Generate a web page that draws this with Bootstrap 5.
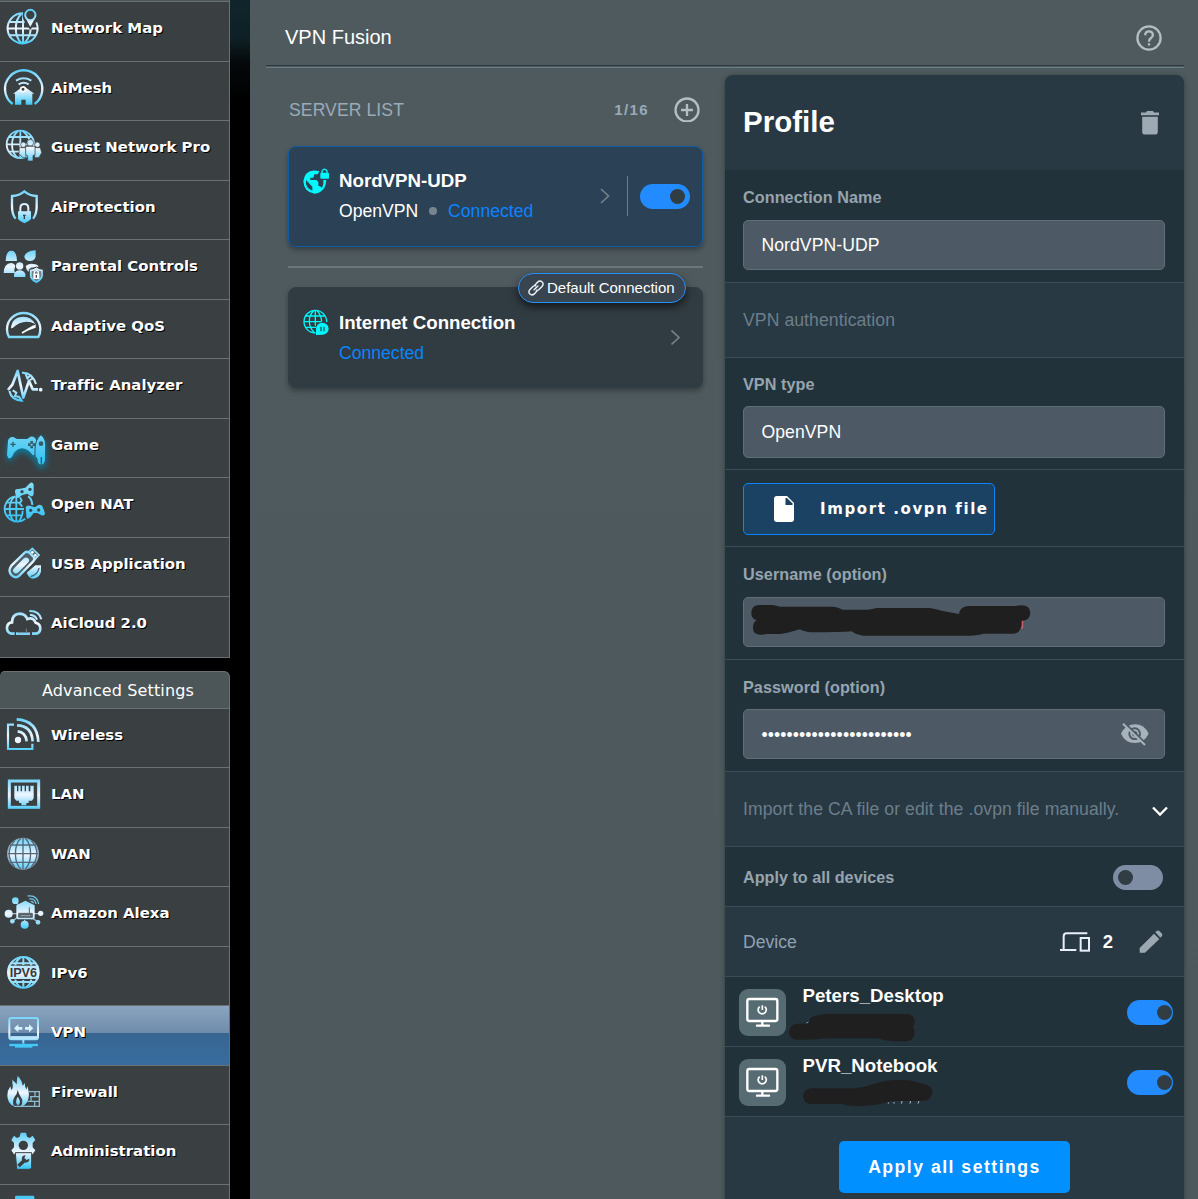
<!DOCTYPE html>
<html lang="en">
<head>
<meta charset="utf-8">
<meta name="viewport" content="width=device-width, initial-scale=1">
<title>VPN Fusion</title>
<link rel="stylesheet" href="https://cdn.jsdelivr.net/npm/bootstrap@5.3.0/dist/css/bootstrap.min.css">
<style>
body{background:#000;font-family:"Liberation Sans",Arial,sans-serif;color:#fff;font-size:17.6px;line-height:20px;height:1199px;overflow:hidden}
svg{display:block}
.frame{height:1199px;overflow:hidden}
.side{width:230px;font-family:"DejaVu Sans",Verdana,sans-serif;font-weight:700;font-size:14.95px;font-variant-ligatures:none;overflow:hidden}
.side-top{height:1px;background:#4c5558;border-right:1px solid #6b7173}
.side-item{height:59.5px;border-top:1px solid #6b7173;border-right:1px solid #6b7173;background:#3a3f41;color:#fff;text-decoration:none;white-space:nowrap}
.side-item svg{width:46px;height:58px;flex:none;margin-right:5px}
.side-item span{padding-top:16.2px;text-shadow:1px 1px 0 #000}
.side-head~.side-item span{padding-top:16px}
.side-last{height:62px;border-bottom:1px solid #6b7173}
.side-on{background:linear-gradient(#8aa4bf 0,#6f8cab 46%,#376590 46.5%,#386c9f 100%)}
.side-head{margin-top:13px;height:36.9px;background:#4c5558;border:1px solid #6b7173;border-bottom:0;border-left:0;border-radius:5px 6px 0 0;font-weight:400;font-size:16px;letter-spacing:.13px;padding:9px 0 0 42px}
.gutter{width:20px;background:linear-gradient(#10252b 0,#0e2025 38px,#05090b 62px,#000 100px)}
.stage{background:linear-gradient(#4f5a5e,#4d595d);padding:0 14px 0 16px}
.title-bar{height:65px;padding:0 22px 0 19px;font-size:20px}
.title-bar span{padding-top:26.5px;line-height:21px}
.title-bar svg{margin-top:25px}
.rule{height:3px;border-top:1px solid #30393c;border-bottom:1px solid #6a7c86;background:#4d595d}
.list-col{width:415px;margin-left:22px}
.list-head{height:77.5px;padding-top:28px;color:#9aaab7}
.list-title{padding-left:1px;letter-spacing:.08px}
.list-head b{font-size:15px;letter-spacing:1.4px}
.add-ic{margin:0 3px 0 25px}
.conn{height:101.5px;border-radius:8px;box-shadow:0 3px 5px rgba(0,0,0,.3);padding-left:14px}
.conn-on{background:#2b4155;border:1px solid #115ba4}
.conn-idle{background:#313c42;border:1px solid #2f3d45;height:101px}
.conn-ic{margin-top:21px}
.conn-tx{padding-left:9px;margin-top:-1px}
.conn-idle .conn-tx{margin-top:1px}
.conn-sub{margin-top:10.5px}
.nm{font-size:18.7px;font-weight:700}
.link-blue{color:#0a84ff}
.bullet{width:7.4px;height:7.4px;border-radius:50%;background:#77858f;margin:0 11.5px 0 11px}
.vline{width:1px;height:40px;background:#6d7d8a;margin:0 12px 0 17px}
.tog{width:50px;height:25px;border-radius:13px;background:#228bff;padding:5px;flex:none}
.tog i{display:block;width:15px;height:15px;border-radius:50%;background:#313d43;margin-left:25px}
.tog-off{background:#7e8ca4;margin:1px 3px 0 0}
.tog-off i{margin-left:0}
.tog-sm{width:46px;margin-top:23px}
.tog-sm i{margin-left:25px}
.sep{height:2px;background:#6b767b;margin:18.5px 0 19.5px}
.pill{position:absolute;right:16px;top:-15px;width:168px;height:30px;border-radius:15px;border:1px solid #2690ff;background:#384550;box-shadow:0 4px 8px rgba(0,0,0,.6);font-size:15px;padding-left:9px}
.panel{width:459px;margin-top:7px;background:#283944;border-radius:8px 8px 0 0;box-shadow:0 1px 5px rgba(0,0,0,.35);height:1130px;overflow:hidden}
.p-row{border-bottom:1px solid #3b4d59;padding:0 18px}
.deep{background:#22323b}
.lab{font-size:16.2px;font-weight:700;color:#96a4ae;line-height:20px;padding-top:16.5px;height:50px;letter-spacing:.06px}
.field{width:422px;height:50px;border:1px solid #606e78;border-radius:5px;background:#4d5a65;padding-left:17.4px;letter-spacing:.08px}
.mut{color:#6c7e8a;letter-spacing:.08px}
.imp{width:252px;height:52px;background:#1c4263;border:1px solid #0a84ff;border-radius:5px;font:700 15px/20px "DejaVu Sans",Verdana,sans-serif;letter-spacing:1.6px;color:#fff;padding:0;white-space:nowrap}
.go{width:231px;height:52px;background:#0190ff;border:0;border-radius:5px;font-weight:700;font-size:17.6px;letter-spacing:1.5px;color:#fff;padding:0}
.over{position:absolute;left:-1px;top:-1px}
.over-row{position:absolute;left:0;top:0}
.dev{height:70px;padding:0 11px 0 14px}
.dev .nm{padding-top:8.5px}
.dev-ic{width:47px;height:47px;border-radius:9px;background:#576b72;margin:12px 16.5px 0 0}
.dots{letter-spacing:.11px;padding-top:1px}
</style>
<script src="https://cdn.jsdelivr.net/npm/bootstrap@5.3.0/dist/js/bootstrap.bundle.min.js"></script>
</head>
<body>
<svg width="0" height="0" class="position-absolute">
  <defs>
    <linearGradient id="ice" gradientUnits="userSpaceOnUse" x1="0" y1="22" x2="0" y2="128"><stop offset="0" stop-color="#55cdfa"/><stop offset=".55" stop-color="#f0f6ff"/><stop offset="1" stop-color="#3fc8f8"/></linearGradient>
    <linearGradient id="aqua" gradientUnits="userSpaceOnUse" x1="0" y1="14" x2="0" y2="138"><stop offset="0" stop-color="#86dcf8"/><stop offset="1" stop-color="#2fc0f2"/></linearGradient>
  </defs>
</svg>
<div class="frame d-flex">
  <nav class="side flex-shrink-0">
    <div class="side-top"></div>
    <a class="side-item d-flex"><svg viewBox="0 0 138 174" fill="none" stroke="url(#ice)" stroke-width="6"><path d="M69 34A45 45 0 1 0 109 61M69 34V124M64 36C42 55 42 104 64 122M74 122Q92 104 92 79M28 60H74M24 79.500H114M28 100H110"/><path d="M91 75L75 50A18 18 0 1 1 107 50Z" fill="#e9f4ff" stroke="#3a3f41" stroke-width="10"/><path d="M91 75L77 49H105Z" fill="#e9f4ff" stroke="none"/><circle cx="91" cy="39" r="15.500" fill="#3a3f41" stroke-width="6"/></svg><span>Network Map</span></a>
    <a class="side-item d-flex"><svg viewBox="0 0 138 174" fill="none" stroke="url(#ice)" stroke-width="7"><path d="M38 126A56 56 0 1 1 104 126"/><path d="M48 56Q71 42 94 56M56 67Q71 57 86 67" stroke-width="6"/><path d="M71 72L103 95H97V128H77V113H64V128H45V95H39Z" fill="url(#ice)" stroke="none"/><circle cx="69" cy="82" r="7" fill="#3a3f41" stroke="#fff" stroke-width="5"/></svg><span>AiMesh</span></a>
    <a class="side-item d-flex"><svg viewBox="0 0 138 174" fill="none" stroke="url(#ice)" stroke-width="5.500"><circle cx="61" cy="70" r="41"/><path d="M61 29V112M54 30C30 50 30 92 54 111M68 30Q88 46 90 64M27 48H95M20 70H102M27 92H80"/><g fill="url(#ice)" stroke="#3a3f41" stroke-width="2"><circle cx="70" cy="71" r="8"/><circle cx="112" cy="71" r="8"/><path d="M58 80H78V110H68L57 98ZM104 80H121L125 95L117 110H104Z"/><circle cx="91" cy="65" r="10"/><path d="M77 76H105V101L99 104V120H83V104L77 101Z"/></g></svg><span>Guest Network Pro</span></a>
    <a class="side-item d-flex"><svg viewBox="0 0 138 174" fill="none" stroke="url(#ice)" stroke-width="7"><path d="M47 113Q36 101 36 76V45Q58 44 73 31Q88 44 110 45V76Q110 101 99 113"/><path d="M61 93V82Q61 69 73 69T85 82V93" stroke-width="6"/><path d="M54 91H93V114Q87 122 73 127Q60 122 54 114Z" fill="url(#ice)" stroke="none"/><path d="M73 101V114M69 103H77" stroke="#3a3f41" stroke-width="4"/></svg><span>AiProtection</span></a>
    <a class="side-item d-flex"><svg viewBox="0 0 138 174" fill="url(#ice)"><path d="M34 32Q50 32 51 63H17Q18 32 34 32ZM73 50Q76 33 107 31V50Q103 63 90 63Q76 63 73 50ZM11 99Q12 70 33 69Q44 70 46 78Q40 94 46 99ZM77 78Q83 72 93 71Q113 71 116 80L92 83L87 96Q78 90 77 78Z"/><circle cx="59" cy="78" r="11"/><path d="M42 111V103Q46 91 59 91T76 103V111Z"/><path d="M109 81Q119 88 130 88V106Q130 121 109 131Q88 121 88 106V88Q99 88 109 81Z" stroke="#3a3f41" stroke-width="3"/><path d="M109 89Q116 94 124 94V106Q123 116 109 124Q95 116 95 106V94Q102 94 109 89Z" fill="#6f8290"/><rect x="100" y="101" width="18" height="16" fill="#fff"/><path d="M103 102V96Q109 88 115 96V102" fill="none" stroke="#fff" stroke-width="4"/><path d="M109 105V113" stroke="#3a3f41" stroke-width="4"/></svg><span>Parental Controls</span></a>
    <a class="side-item d-flex"><svg viewBox="0 0 138 174" fill="none" stroke="url(#ice)" stroke-width="7"><path d="M27 111Q21 102 21 87A50 48 0 0 1 121 87Q121 102 115 111Z"/><path d="M33 85Q35 50 71 50Q93 50 106 72Q70 54 38 84Z" fill="url(#ice)" stroke="none"/><path d="M66 99L101 78" stroke="#fff" stroke-width="5"/><path d="M72 96L107 83V73Z" fill="#fff" stroke="none"/></svg><span>Adaptive QoS</span></a>
    <a class="side-item d-flex"><svg viewBox="0 0 138 174" fill="none" stroke="url(#ice)" stroke-width="8"><path d="M24 93L37 77L53 36L70 116L87 65L98 91H114" stroke-linejoin="round"/><path d="M66 41Q96 39 108 75M76 43L82 58L92 49M99 58L90 63M28 96Q34 123 65 125L57 114L45 111L49 101L38 94" stroke-width="6"/><circle cx="122" cy="92" r="5.500" fill="#f0f6ff" stroke="none"/></svg><span>Traffic Analyzer</span></a>
    <a class="side-item d-flex"><svg viewBox="0 0 138 174" fill="url(#aqua)" style="filter:drop-shadow(0 3px 3px #087fa5)"><path d="M24 65Q28 52 40 54L51 60H82L91 53Q104 50 109 65L112 95Q106 112 98 108Q83 88 66 88Q45 90 36 113Q26 125 21 109Z"/><path d="M123 47Q140 61 137 88V116Q137 138 123 138Q111 138 111 120L105 112V92Q105 61 123 47Z" stroke="#2e5260" stroke-width="3"/><path d="M31 76H47M39 68V84M124 114V134" stroke="#315d6c" stroke-width="4"/><path d="M95 66V88M84 77H106" stroke="#315d6c" stroke-width="8" stroke-dasharray="8 6"/><circle cx="123" cy="74" r="7" fill="#315d6c"/></svg><span>Game</span></a>
    <a class="side-item d-flex"><svg viewBox="0 0 138 174" fill="none" stroke="url(#aqua)" stroke-width="5.500"><path d="M46 55A38 38 0 1 0 76 122M49 55V133M44 56C24 70 24 116 44 132M55 132Q68 116 68 98M17 74H57L67 86M12 93H72M17 112H68M60 58L65 68L58 76"/><path d="M84 55Q95 60 97 81" stroke-width="6"/><path d="M45 42Q44 31 56 33L76 29L88 17Q98 9 101 20V42Q102 58 91 54L82 47L67 51L55 60Q47 62 47 52Z" fill="url(#aqua)" stroke="none"/><path d="M77 88Q82 79 92 84L105 88L115 81Q126 78 129 89L135 106Q134 117 122 110L112 105H101L92 117Q79 129 79 113Z" fill="url(#aqua)" stroke="none"/><g fill="#3a4b52" stroke="none"><circle cx="66" cy="41" r="5"/><circle cx="90" cy="34" r="5"/><circle cx="92" cy="97" r="5"/><circle cx="116" cy="96" r="5"/></g></svg><span>Open NAT</span></a>
    <a class="side-item d-flex"><svg viewBox="0 0 138 174" fill="none" stroke="url(#ice)" stroke-width="7"><path d="M80 104L106 82H123V101Q118 120 99 122Q86 120 80 104Z" fill="url(#ice)" stroke="none"/><path d="M92 116Q114 109 117 90" stroke="#41616e" stroke-width="4"/><path d="M84 43L97 31L117 51L104 65Z" stroke-width="5" fill="#56727e"/><circle cx="97" cy="43" r="4" fill="#fff" stroke="none"/><circle cx="106" cy="52" r="4" fill="#fff" stroke="none"/><path d="M34 83L74 44Q81 38 89 45L101 57Q106 64 99 71L58 113Q48 123 36 113Q22 100 34 83Z" fill="#4c5f68"/><path d="M44 92L72 63Q78 58 83 62T83 72L54 101Q48 107 43 102T44 92Z" fill="url(#ice)" stroke-width="4"/></svg><span>USB Application</span></a>
    <a class="side-item side-last d-flex"><svg viewBox="0 0 138 174" fill="none" stroke="url(#ice)" stroke-width="8"><path d="M44 110H34Q20 107 21 91Q23 77 36 76Q36 51 60 50Q76 51 82 66Q99 59 107 77Q122 81 121 96Q119 110 106 110H96M48 110H90"/><path d="M90 53Q106 54 111 68M88 42Q118 41 124 67" stroke-width="6"/><path d="M52 107H88M79 95V106" stroke="#698798" stroke-width="3"/></svg><span>AiCloud 2.0</span></a>

    <div class="side-head">Advanced Settings</div>
    <a class="side-item d-flex"><svg viewBox="0 0 138 174" fill="none" stroke="url(#ice)" stroke-width="6.500"><path d="M42 47H24V120H97V104"/><path d="M50 31Q112 34 115 99M51 49Q95 50 98 97M53 67Q77 69 80 97" stroke-width="8"/><circle cx="54" cy="93" r="9.500" fill="#edf5ff" stroke="none"/></svg><span>Wireless</span></a>
    <a class="side-item d-flex"><svg viewBox="0 0 138 174" fill="none" stroke="url(#ice)"><rect x="28" y="39" width="88" height="79" stroke-width="9"/><path d="M43 53H51V70H55V53H62V70H66V53H74V70H78V53H86V70H91V53H101V91L96 98H86V105H79V112H64V105H57V98H49L43 91Z" fill="url(#ice)" stroke="none"/></svg><span>LAN</span></a>
    <a class="side-item d-flex"><svg viewBox="0 0 138 174" fill="none" stroke="#53697a" stroke-width="4"><circle cx="69" cy="77" r="46" fill="url(#ice)" stroke="#8fa9bc"/><path d="M69 30V124M62 31C41 53 41 101 62 123M76 31C97 53 97 101 76 123M44 38C22 62 22 92 44 116M94 38C116 62 116 92 94 116M30 51H108M24 77H114M30 103H108"/></svg><span>WAN</span></a>
    <a class="side-item d-flex"><svg viewBox="0 0 138 174" fill="url(#ice)" stroke="none"><path d="M25 80H123M45 40L58 57M38 102L53 91M114 105L97 93M74 112V98" stroke="#a3bdcd" stroke-width="4"/><circle cx="26" cy="80" r="12"/><circle cx="122" cy="79" r="8"/><circle cx="46" cy="41" r="10"/><circle cx="74" cy="113" r="12"/><circle cx="37" cy="103" r="7"/><circle cx="114" cy="106" r="7"/><path d="M49 55L76 41L104 55V93Q100 99 92 97H57Q49 97 49 89Z"/><path d="M56 79H97V91H56ZM88 61V78" stroke="#57636b" stroke-width="3" fill="#57636b"/><path d="M62 86H91" stroke="#b9c5cc" stroke-width="2"/><path d="M83 27Q112 23 116 51M88 36Q106 34 108 51M92 43Q99 43 101 49" fill="none" stroke="#6fc7e5" stroke-width="4"/></svg><span>Amazon Alexa</span></a>
    <a class="side-item d-flex"><svg viewBox="0 0 138 174" fill="none" stroke="url(#ice)" stroke-width="6"><circle cx="70" cy="76" r="46"/><path d="M70 28V54M62 31Q47 42 46 55M78 31Q93 42 94 55M32 49H108M70 99V122M46 98Q48 111 62 121M94 98Q92 111 78 121M32 105H108"/><path d="M24 56H116V96H24Z" fill="url(#ice)" stroke="none"/><text x="29" y="89" textLength="82" lengthAdjust="spacingAndGlyphs" font-family="Liberation Sans" font-weight="700" font-size="36" fill="#343b40" stroke="none">IPV6</text></svg><span>IPv6</span></a>
    <a class="side-item side-on d-flex"><svg viewBox="0 0 138 174" fill="none" stroke="url(#ice)" stroke-width="6"><rect x="28" y="36" width="86" height="64" rx="6"/><path d="M31 95H111" stroke-width="9"/><path d="M70 100V113" stroke-width="6"/><path d="M28 117H114" stroke="#43c9f6" stroke-width="7"/><path d="M48 119H94V122H48Z" fill="#43c9f6" stroke="#43c9f6"/><path d="M42 67L55 55V63H67V71H55V79ZM100 67L87 55V63H75V71H87V79Z" fill="#d4f2ff" stroke="none"/></svg><span>VPN</span></a>
    <a class="side-item d-flex"><svg viewBox="0 0 138 174" fill="url(#ice)"><path d="M42 121Q23 113 22 89Q22 73 31 61L34 72Q41 66 37 51Q39 43 35 40Q45 48 50 55Q50 43 53 29Q66 43 68 59L75 51Q73 62 79 71L82 60Q91 86 83 105Q75 121 62 121Q73 107 61 91Q57 84 53 72Q51 87 43 94Q36 108 42 121Z"/><path d="M53 92Q66 108 54 118Q43 109 53 92Z"/><path d="M86 77H118V121H42M90 92H118M82 106H118M105 77V92M93 92V106M104 106V121" fill="none" stroke="#8dbbd0" stroke-width="4"/></svg><span>Firewall</span></a>
    <a class="side-item d-flex"><svg viewBox="0 0 138 174" fill="url(#ice)"><path d="M62 23H78L81 35L89 39L98 32L106 45L98 54V67L106 76L98 88H42L34 76L42 67V54L34 45L42 32L51 39L59 35Z"/><circle cx="70" cy="61" r="14" fill="#3a3f41"/><path d="M46 83H95V127Q94 133 87 133H50Z" stroke="#3a3f41" stroke-width="3"/><path d="M77 91Q63 91 66 106L52 119L59 127L74 113Q89 113 88 101L80 105L73 99Z" fill="#3a3f41"/></svg><span>Administration</span></a>
    <a class="side-item d-flex"><svg viewBox="0 0 138 174" fill="#49c8f4"><rect x="45" y="32" width="58" height="40" rx="4"/></svg><span></span></a>
  </nav>
  <div class="gutter flex-shrink-0"></div>

  <main class="stage flex-grow-1">
    <div class="title-bar d-flex justify-content-between"><span>VPN Fusion</span>
      <svg width="26" height="26" viewBox="0 0 26 26" fill="none" stroke="#b4bec3" stroke-width="2.300"><circle cx="13" cy="13" r="11.600"/><path d="M9.200 10.300Q9.300 6.400 13 6.400T16.900 10Q16.900 11.800 14.700 13.300Q13 14.500 13 16.700M13 18.300V20.500"/></svg></div>
    <div class="rule"></div>
    <div class="d-flex justify-content-between">
      <section class="list-col">
        <div class="list-head d-flex justify-content-between">
          <span class="list-title pt-1">SERVER LIST</span>
          <span class="d-flex align-items-start"><b class="pt-1">1/16</b>
          <svg class="add-ic" width="26" height="26" viewBox="0 0 26 26" fill="none" stroke="#b4bec3" stroke-width="2.300"><circle cx="13" cy="14" r="11.500"/><path d="M13 8V20M7 14H19"/></svg></span>
        </div>
        <article class="conn conn-on d-flex align-items-center">
          <svg class="conn-ic align-self-start" width="27" height="27" viewBox="129 504 81 81" fill="#00f8ff"><path d="M170 512Q135 507 130 543Q131 576 164 581Q197 577 199 540H190Q191 558 185 563Q182 558 175 557V546L169 540H151V533H160L163 523H173L178 514ZM138 540L157 560V572Q135 564 138 540Z" fill-rule="evenodd"/><rect x="181" y="518" width="26" height="18" rx="3"/><path d="M186 520V513Q193 502 201 513V520" fill="none" stroke="#00f8ff" stroke-width="4"/></svg>
          <div class="conn-tx flex-grow-1"><div class="nm">NordVPN-UDP</div><div class="conn-sub d-flex align-items-center">OpenVPN<span class="bullet"></span><span class="link-blue">Connected</span></div></div>
          <svg width="10" height="16" viewBox="0 0 10 16" fill="none" stroke="#74818b" stroke-width="1.700"><path d="M1 1L8.500 8L1 15"/></svg>
          <span class="vline"></span>
          <span class="tog me-2"><i></i></span><span class="pe-1"></span>
        </article>
        <div class="sep"></div>
        <article class="conn conn-idle d-flex align-items-center position-relative">
          <svg class="conn-ic align-self-start" width="27" height="27" viewBox="129 178 81 81" fill="none" stroke="#00f8ff" stroke-width="4"><path d="M166 250A34 34 0 1 1 200 217M166 182V228M161 183C143 200 143 231 164 250M171 183Q184 197 185 215M137 199H195M132 216H185M137 233H168"/><path d="M168 256V237A19 18 0 1 1 187 255Z" fill="#00f8ff" stroke="none"/><path d="M183 231V245M192 231V245" stroke="#1d5860" stroke-width="4"/></svg>
          <div class="conn-tx flex-grow-1"><div class="nm">Internet Connection</div><div class="conn-sub link-blue">Connected</div></div>
          <svg class="me-3" width="15" height="16" viewBox="0 0 15 16" fill="none" stroke="#74818b" stroke-width="1.700"><path d="M.5 .5L8 7.500L.5 14.500"/></svg>
          <div class="pill d-flex align-items-center text-nowrap"><svg width="19" height="16" viewBox="0 0 19 16" fill="none" stroke="#eef3f8" stroke-width="1.400" stroke-linecap="round"><path d="M6.600 5.500L9.700 2.100Q12 .1 14.100 2T14 6.500L11 9.600Q9.800 10.700 8.400 10.200M9.400 10.500L6.300 13.900Q4 15.900 1.900 14T2 9.500L5 6.400Q6.200 5.300 7.600 5.800M6.100 9.800L9.900 6.100"/></svg>Default Connection</div>
        </article>
      </section>

      <section class="panel">
        <div class="d-flex justify-content-between align-items-center px-3" style="height:95px"><b style="font-size:29.500px;padding:0 0 1px 2px">Profile</b>
          <svg width="20" height="26" viewBox="0 0 20 26" fill="#9daab3" style="margin-right:8px"><path d="M1 2.500H6L7 1H13L14 2.500H19V5.300H1ZM2.200 6.700H17.800V22Q17.800 24.500 15.500 24.500H4.500Q2.200 24.500 2.200 22Z"/></svg></div>
        <div class="p-row deep" style="height:113px"><div class="lab">Connection Name</div><div class="field d-flex align-items-center">NordVPN-UDP</div></div>
        <div class="p-row mut d-flex align-items-center" style="height:75px">VPN authentication</div>
        <div class="p-row deep" style="height:112px"><div class="lab" style="height:48px;padding-top:15.500px">VPN type</div><div class="field d-flex align-items-center" style="height:52px">OpenVPN</div></div>
        <div class="p-row deep" style="height:77px;padding-top:13px"><button class="imp btn d-flex align-items-center"><svg width="21" height="26" viewBox="0 0 21 26" style="margin:0 25px 0 30px"><path d="M3 0H13L20 7V23Q20 26 17 26H3Q0 26 0 23V3Q0 0 3 0Z" fill="#fff"/><path d="M11.500 2V9H18.500V7.500L13 2Z" fill="#1c4263"/></svg>Import .ovpn file</button></div>
        <div class="p-row deep" style="height:113px"><div class="lab">Username (option)</div><div class="field position-relative">
          <svg class="over" width="422" height="50" viewBox="69 21 1266 150"><path d="M904 93H908V114H902" fill="none" stroke="#d9656d" stroke-width="3"/><path d="M117 45H160L180 50H340Q355 52 368 59H445L470 54H630Q650 57 665 62L717 72Q720 50 745 48H885Q930 38 931 68Q930 92 905 92Q905 131 880 131H790Q775 136 750 137H430Q410 135 395 124Q370 127 270 127Q250 124 240 118Q200 130 180 132H140Q98 142 99 112Q100 95 110 91Q93 85 94 67Q96 45 117 45Z" fill="#1f1f1f"/></svg></div></div>
        <div class="p-row deep" style="height:112px"><div class="lab" style="height:49px">Password (option)</div><div class="field d-flex align-items-center justify-content-between"><span class="dots">••••••••••••••••••••••••</span>
          <svg width="30" height="26" viewBox="1201 395 90 78" style="margin-right:14px"><path d="M1204 433Q1217 406 1245 405T1287 433Q1273 461 1245 461T1204 433Z" fill="#a7b2bb"/><circle cx="1245" cy="433" r="16" fill="none" stroke="#4d5a65" stroke-width="6"/><circle cx="1245" cy="433" r="8" fill="#4d5a65"/><path d="M1216 403L1283 468" stroke="#4d5a65" stroke-width="8"/><path d="M1210 403L1276 467" stroke="#a7b2bb" stroke-width="6"/></svg></div></div>
        <div class="p-row mut d-flex align-items-center justify-content-between" style="height:75px"><span>Import the CA file or edit the .ovpn file manually.</span><svg width="16" height="11" viewBox="0 0 16 11" fill="none" stroke="#fff" stroke-width="2.300" style="margin:4px -2px 0 0"><path d="M1 1.500L8 8.500L15 1.500"/></svg></div>
        <div class="p-row deep d-flex align-items-center justify-content-between" style="height:60px"><b style="font-size:16.200px;color:#96a4ae">Apply to all devices</b><span class="tog tog-off"><i></i></span></div>
        <div class="p-row d-flex align-items-center" style="height:70px;color:#91a1b2"><span class="flex-grow-1">Device</span>
          <svg width="31" height="21" viewBox="1018 122 93 63" fill="none" stroke="#e9f0fb" stroke-width="6"><path d="M1103 129H1041Q1032 129 1032 138V178M1021 179H1070" /><rect x="1083" y="143" width="25" height="38"/></svg>
          <b class="text-white" style="font-size:18.500px;margin:0 26px 0 13px">2</b>
          <svg width="24" height="24" viewBox="1258 121 72 72" fill="#9ca9b1" style="margin-right:3px"><path d="M1260 175L1303 132L1319 148L1276 189H1260ZM1307 128L1312 123Q1316 121 1319 124L1327 132Q1329 135 1327 139L1322 144Z"/></svg></div>
        <div class="p-row dev deep d-flex position-relative"><div class="dev-ic"><svg width="47" height="47" viewBox="57 297 141 141" fill="none" stroke="#fff" stroke-width="7"><rect x="82" y="327" width="90" height="66" rx="6"/><path d="M127 395V405M111 407H147" stroke-linecap="round"/><path d="M119 350Q111 357 117 367Q127 376 136 367Q143 357 134 350M127 346V360" stroke-width="5"/></svg></div><div class="nm flex-grow-1">Peters_Desktop</div><span class="tog tog-sm"><i></i></span>
          <svg class="over-row" width="234" height="69" viewBox="15 261 702 207"><path d="M257 402L266 395" stroke="#6aa9d5" stroke-width="3"/><path d="M232 401Q248 402 265 400Q268 375 298 376Q308 371 325 372H562Q584 374 584 397Q583 408 578 412Q584 417 584 430Q581 453 557 454H520Q492 452 475 445H315Q295 450 230 449Q207 446 207 425Q209 402 232 401Z" fill="#1f1f1f"/></svg></div>
        <div class="p-row dev deep d-flex position-relative"><div class="dev-ic"><svg width="47" height="47" viewBox="57 297 141 141" fill="none" stroke="#fff" stroke-width="7"><rect x="82" y="327" width="90" height="66" rx="6"/><path d="M127 395V405M111 407H147" stroke-linecap="round"/><path d="M119 350Q111 357 117 367Q127 376 136 367Q143 357 134 350M127 346V360" stroke-width="5"/></svg></div><div class="nm flex-grow-1">PVR_Notebook</div><span class="tog tog-sm"><i></i></span>
          <svg class="over-row" width="234" height="69" viewBox="15 471 702 207"><path d="M505 637V641M522 636V641M547 630L544 641M572 630L570 641M598 630L594 641" stroke="#aebbc4" stroke-width="3"/><path d="M275 595H405Q430 593 450 585L495 573Q535 568 575 572L615 583Q638 588 637 608Q633 630 610 633H515Q490 641 465 645Q420 650 380 646Q370 641 360 642H272Q249 639 249 618Q251 597 275 595Z" fill="#1f1f1f"/></svg></div>
        <div class="d-flex justify-content-center" style="padding-top:24px"><button class="go btn">Apply all settings</button></div>
      </section>
    </div>
  </main>
</div>
</body>
</html>
